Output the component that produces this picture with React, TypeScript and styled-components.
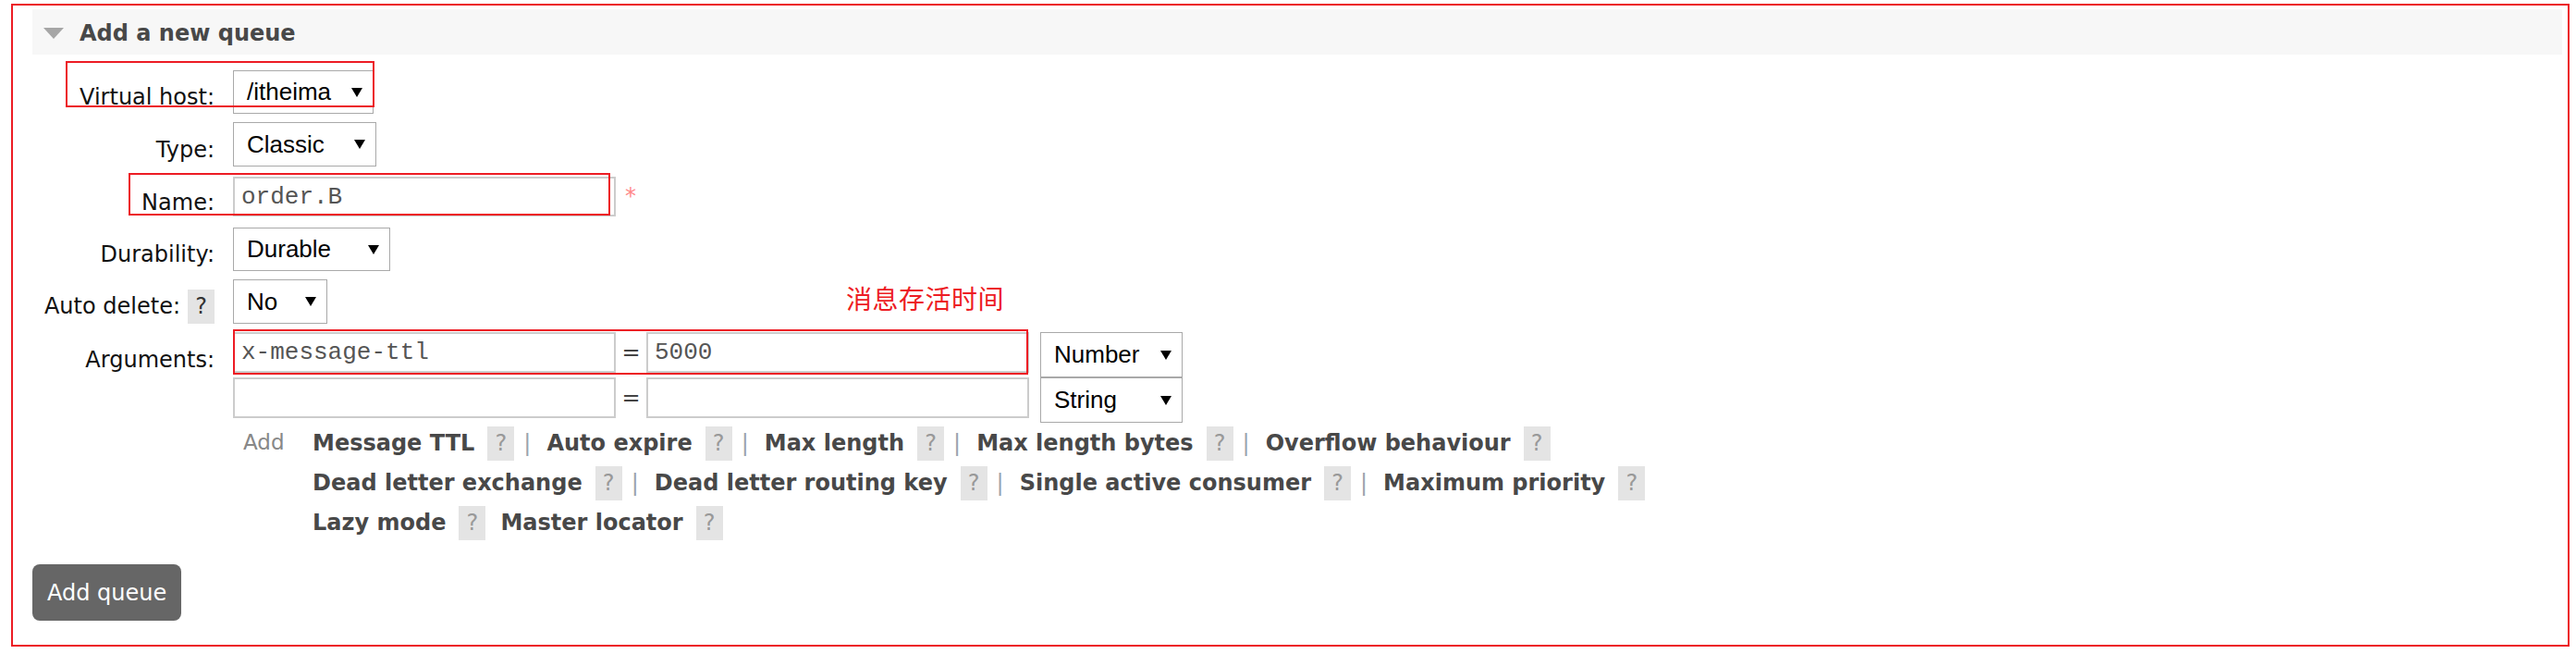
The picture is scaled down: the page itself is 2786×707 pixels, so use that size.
import React from 'react'
import styled, { createGlobalStyle } from 'styled-components'

const RED = '#ed1c24'
const TEXT = '#484848'

const GlobalStyle = createGlobalStyle`
  html, body {
    margin: 0;
    padding: 0;
    background: #fff;
  }
  body {
    font-family: 'DejaVu Sans', Verdana, sans-serif;
    font-size: 24px;
    color: #111;
  }
`

const Frame = styled.div`
  position: relative;
  box-sizing: border-box;
  width: 2767px;
  height: 695px;
  margin: 4px 0 0 12px;
  padding: 4px 6px 0 21px;
  border: 2px solid ${RED};
`

const SectionHeader = styled.div`
  display: flex;
  align-items: center;
  box-sizing: border-box;
  height: 49px;
  padding: 2px 0 0 12px;
  background: #f7f7f7;
`

const Title = styled.h2`
  margin: 0 0 0 17px;
  font-size: 24px;
  font-weight: bold;
  line-height: 28px;
  color: ${TEXT};
`

const FormRow = styled.div<{ $top: number }>`
  display: grid;
  grid-template-columns: 197px 1fr;
  column-gap: 20px;
  margin-top: ${p => p.$top}px;
`

const Label = styled.div<{ $pad?: number }>`
  padding-top: ${p => p.$pad ?? 15.5}px;
  line-height: 28px;
  text-align: right;
  white-space: nowrap;
  color: #111;
`

const Cell = styled.div`
  display: flex;
  align-items: baseline;
`

const SelectBox = styled.div<{ $w: number; $h?: number }>`
  box-sizing: border-box;
  display: flex;
  align-items: center;
  justify-content: space-between;
  width: ${p => p.$w}px;
  height: ${p => p.$h ?? 48}px;
  padding: 0 11px 0 14px;
  border: 1px solid #a9a9a9;
  background: #fff;
  font-family: 'Liberation Sans', Arial, sans-serif;
  font-size: 26px;
  color: #000;
  flex: 0 0 auto;
`

const TextInput = styled.input<{ $h?: number }>`
  box-sizing: border-box;
  width: 414px;
  height: ${p => p.$h ?? 44}px;
  padding: 0 7px;
  border: 2px solid #ccc;
  background: #fff;
  font-family: 'Liberation Mono', 'Courier New', monospace;
  font-size: 26px;
  color: #555;
  outline: none;
  flex: 0 0 auto;
`

const Mandatory = styled.span`
  padding-left: 10px;
  color: #f88;
  line-height: 28px;
`

const Help = styled.span<{ $dim?: boolean }>`
  display: inline-block;
  width: 29px;
  height: 37px;
  margin-left: ${p => (p.$dim ? 14 : 8)}px;
  line-height: 37px;
  text-align: center;
  vertical-align: baseline;
  background: #e4e4e4;
  color: ${p => (p.$dim ? '#999' : '#333')};
  font-weight: normal;
`

const ArgList = styled.div`
  display: flex;
  flex-direction: column;
`

const ArgRow = styled.div`
  display: flex;
  align-items: flex-start;
`

const Equals = styled.span`
  width: 33px;
  line-height: 44px;
  text-align: center;
  color: #444;
`

const TypeSelect = styled(SelectBox)`
  margin-left: 12px;
`

const AddBlock = styled.div`
  display: flex;
  align-items: flex-start;
`

const AddWord = styled.span`
  box-sizing: border-box;
  width: 86px;
  padding-left: 11px;
  font-size: 23px;
  line-height: 34px;
  color: #888;
`

const LinkRows = styled.div`
  display: flex;
  flex-direction: column;
  gap: 6px;
`

const LinkRow = styled.div`
  display: flex;
  align-items: center;
  height: 37px;
  white-space: nowrap;
`

const LinkText = styled.span<{ $gap: number }>`
  margin-left: ${p => p.$gap}px;
  font-weight: bold;
  line-height: 37px;
  color: ${TEXT};
`

const Separator = styled.span`
  margin: 0 0 0 10px;
  line-height: 37px;
  color: #9aa3ad;
`

const Button = styled.button`
  display: block;
  height: 61px;
  margin-top: 26px;
  padding: 0 16px;
  border: 0;
  border-radius: 8px;
  background: #666;
  color: #fff;
  font-family: 'DejaVu Sans', Verdana, sans-serif;
  font-size: 24px;
`

const Callout = styled.div<{ $x: number; $y: number; $w: number; $h: number }>`
  position: absolute;
  left: ${p => p.$x}px;
  top: ${p => p.$y}px;
  width: ${p => p.$w}px;
  height: ${p => p.$h}px;
  box-sizing: border-box;
  border: 2px solid ${RED};
  pointer-events: none;
`

const Note = styled.div`
  position: absolute;
  left: 901px;
  top: 302px;
  font-family: 'Noto Sans CJK SC', sans-serif;
  font-size: 28px;
  line-height: 28px;
  letter-spacing: 0.5px;
  color: ${RED};
`

const Caret = () => (
  <svg width="12" height="10" viewBox="0 0 12 10">
    <polygon points="0,0 12,0 6,10" fill="#000" />
  </svg>
)

const Select = ({ value, w, h }: { value: string; w: number; h?: number }) => (
  <SelectBox $w={w} $h={h}>
    <span>{value}</span>
    <Caret />
  </SelectBox>
)

type Link = { label: string; sep: boolean }

const linkRows: Link[][] = [
  [
    { label: 'Message TTL', sep: true },
    { label: 'Auto expire', sep: true },
    { label: 'Max length', sep: true },
    { label: 'Max length bytes', sep: true },
    { label: 'Overflow behaviour', sep: false },
  ],
  [
    { label: 'Dead letter exchange', sep: true },
    { label: 'Dead letter routing key', sep: true },
    { label: 'Single active consumer', sep: true },
    { label: 'Maximum priority', sep: false },
  ],
  [
    { label: 'Lazy mode', sep: false },
    { label: 'Master locator', sep: false },
  ],
]

export default function App() {
  return (
    <>
      <GlobalStyle />
      <Frame>
        <SectionHeader>
          <svg width="22" height="12" viewBox="0 0 22 12">
            <polygon points="0,0 22,0 11,12" fill="#a6a6a6" />
          </svg>
          <Title>Add a new queue</Title>
        </SectionHeader>

        <FormRow $top={17}>
          <Label $pad={15}>Virtual host:</Label>
          <Cell>
            <Select value="/itheima" w={152} h={47} />
          </Cell>
        </FormRow>

        <FormRow $top={9}>
          <Label $pad={16}>Type:</Label>
          <Cell>
            <Select value="Classic" w={155} />
          </Cell>
        </FormRow>

        <FormRow $top={11}>
          <Label $pad={13.5}>Name:</Label>
          <Cell>
            <TextInput $h={43} defaultValue="order.B" />
            <Mandatory>*</Mandatory>
          </Cell>
        </FormRow>

        <FormRow $top={12}>
          <Label $pad={15}>Durability:</Label>
          <Cell>
            <Select value="Durable" w={170} h={47} />
          </Cell>
        </FormRow>

        <FormRow $top={9}>
          <Label $pad={11}>
            Auto delete:<Help>?</Help>
          </Label>
          <Cell>
            <Select value="No" w={102} />
          </Cell>
        </FormRow>

        <FormRow $top={9}>
          <Label $pad={16}>Arguments:</Label>
          <ArgList>
            <ArgRow>
              <TextInput defaultValue="x-message-ttl" />
              <Equals>=</Equals>
              <TextInput defaultValue="5000" />
              <TypeSelect $w={154} $h={49}>
                <span>Number</span>
                <Caret />
              </TypeSelect>
            </ArgRow>
            <ArgRow>
              <TextInput defaultValue="" />
              <Equals>=</Equals>
              <TextInput defaultValue="" />
              <TypeSelect $w={154} $h={49}>
                <span>String</span>
                <Caret />
              </TypeSelect>
            </ArgRow>
          </ArgList>
        </FormRow>

        <FormRow $top={4}>
          <div />
          <AddBlock>
            <AddWord>Add</AddWord>
            <LinkRows>
              {linkRows.map((row, i) => (
                <LinkRow key={i}>
                  {row.map((link, j) => {
                    const prev = row[j - 1]
                    const gap = j === 0 ? 0 : prev.sep ? 17 : 16
                    return (
                      <React.Fragment key={link.label}>
                        <LinkText $gap={gap}>{link.label}</LinkText>
                        <Help $dim>?</Help>
                        {link.sep && <Separator>|</Separator>}
                      </React.Fragment>
                    )
                  })}
                </LinkRow>
              ))}
            </LinkRows>
          </AddBlock>
        </FormRow>

        <Button>Add queue</Button>

        <Callout $x={57} $y={60} $w={334} $h={50} />
        <Callout $x={125} $y={181} $w={521} $h={46} />
        <Callout $x={238} $y={350} $w={860} $h={49} />
        <Note>消息存活时间</Note>
      </Frame>
    </>
  )
}
